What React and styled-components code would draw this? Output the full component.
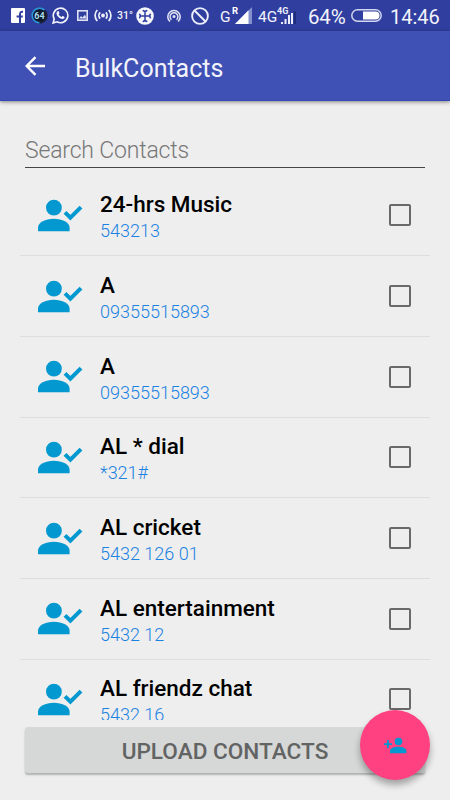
import styled, { createGlobalStyle } from "styled-components";

const GlobalStyle = createGlobalStyle`
  * {
    box-sizing: border-box;
  }

  body {
    margin: 0;
    background-color: #eeeeee;
    font-family: Roboto, sans-serif;
  }
`;

const Screen = styled.div`
  position: relative;
  display: flex;
  flex-direction: column;
  width: 450px;
  height: 800px;
  overflow: hidden;
  background-color: #eeeeee;
`;

const StatusBar = styled.div`
  display: flex;
  align-items: center;
  flex: none;
  height: 31px;
  padding-left: 11px;
  background-color: #303f9f;
  color: #f2f3fb;
`;

const StatusIcon = styled.svg`
  display: block;
  flex: none;
  margin-right: ${({ $gap }) => $gap}px;
`;

const StatusText = styled.span`
  flex: none;
  width: ${({ $width }) => $width}px;
  font-size: ${({ $size }) => $size}px;
  font-weight: ${({ $weight }) => $weight || 400};
  letter-spacing: ${({ $spacing }) => $spacing || 0}px;
  line-height: 28px;
  padding-top: ${({ $drop }) => $drop || 0}px;
  white-space: nowrap;
`;

const AppBar = styled.header`
  position: relative;
  display: flex;
  align-items: center;
  flex: none;
  height: 70px;
  padding-left: 25px;
  background-color: #3f51b5;
  border-bottom: 1px solid #3346b4;
  box-shadow: 0 1px 4px rgba(0, 0, 0, 0.45);
`;

const BackButton = styled.button`
  display: flex;
  width: 50px;
  padding: 0;
  border: none;
  background-color: transparent;
  cursor: pointer;
`;

const Title = styled.h1`
  margin: 5px 0 0;
  color: #f3f4fb;
  font-size: 25px;
  font-weight: 400;
`;

const SearchInput = styled.input`
  flex: none;
  width: 400px;
  height: 36px;
  margin: 31px 25px 0;
  padding: 2px 0 0;
  border: none;
  border-bottom: 1px solid #454545;
  outline: none;
  background-color: transparent;
  font-family: Roboto, sans-serif;
  font-size: 23px;
  font-weight: 300;
  letter-spacing: -0.18px;

  &::placeholder {
    color: #777777;
    opacity: 1;
  }
`;

const ContactList = styled.ul`
  flex: none;
  height: 545px;
  margin: 7px 20px 0;
  padding: 0.6px 0 0;
  overflow: hidden;
  list-style: none;
`;

const ContactRow = styled.li`
  display: flex;
  height: 80.67px;
  padding: 0 19px 0 18px;
  border-bottom: 1px solid #dddddd;
`;

const ContactIcon = styled.svg`
  display: block;
  flex: none;
  margin-top: 23.4px;
`;

const ContactInfo = styled.div`
  flex: 1;
  padding: 14.7px 0 0 17px;
`;

const Name = styled.div`
  color: #000000;
  font-size: 22.5px;
  font-weight: 500;
  line-height: 28px;
`;

const Phone = styled.div`
  color: #1b82e2;
  font-size: 18px;
  font-weight: 300;
  line-height: 25.4px;
`;

const Checkbox = styled.input`
  appearance: none;
  flex: none;
  width: 22px;
  height: 22px;
  margin: 28.7px 0 0;
  border: 2px solid #696969;
  border-radius: 2px;
`;

const UploadButton = styled.button`
  flex: none;
  width: 400px;
  height: 46px;
  margin: 7px 25px 0;
  padding: 2px 0 0;
  border: none;
  border-radius: 3px;
  background-color: #d6d7d7;
  box-shadow: 0 2px 2px rgba(0, 0, 0, 0.26);
  color: #626363;
  font-family: Roboto, sans-serif;
  font-size: 22.6px;
  font-weight: 500;
`;

const Fab = styled.button`
  position: absolute;
  right: 20px;
  bottom: 20px;
  display: flex;
  align-items: center;
  justify-content: center;
  width: 70px;
  height: 70px;
  padding: 0;
  border: none;
  border-radius: 50%;
  background-color: #ff4081;
  box-shadow: 0 5px 7px rgba(0, 0, 0, 0.32);
`;

const contacts = [
  { name: "24-hrs Music", phone: "543213" },
  { name: "A", phone: "09355515893" },
  { name: "A", phone: "09355515893" },
  { name: "AL * dial", phone: "*321#" },
  { name: "AL cricket", phone: "5432 126 01" },
  { name: "AL entertainment", phone: "5432 12" },
  { name: "AL friendz chat", phone: "5432 16" },
];

const FacebookIcon = () => (
  <StatusIcon width="14" height="15" viewBox="0 0 14 15" $gap={6}>
    <rect width="14" height="15" rx="1" fill="#ffffff" />
    <path
      d="M9 15V9.2M5.6 8.4h6.2M9 10V6.3c0-2 .8-2.6 3-2.5"
      fill="none"
      stroke="#303f9f"
      strokeWidth="2"
    />
  </StatusIcon>
);

const BatteryRing = () => (
  <StatusIcon width="17" height="17" viewBox="0 0 17 17" $gap={4}>
    <circle cx="8.5" cy="8.5" r="7.2" fill="#101a2b" stroke="#18213c" strokeWidth="2" />
    <path
      d="M8.5 15.8A7.3 7.3 0 1 1 13.5 3.2"
      fill="none"
      stroke="#2d92da"
      strokeWidth="1.7"
    />
    <text
      x="8.5"
      y="11.7"
      textAnchor="middle"
      fontFamily="Roboto, sans-serif"
      fontSize="9"
      fontWeight="700"
      fill="#a9dced"
    >
      64
    </text>
  </StatusIcon>
);

const WhatsAppIcon = () => (
  <StatusIcon width="17" height="17" viewBox="0 0 17 17" $gap={8}>
    <path
      d="M1.1 16l1.1-4A7.3 7.3 0 1 1 5 14.8z"
      fill="none"
      stroke="#f2f3fb"
      strokeWidth="1.6"
    />
    <path
      d="M5.5 4.3c.9-.6 1.3 0 1.9 1.6.2.5-.5.9-.7 1.3.7 1.4 1.6 2.2 2.9 2.8.5-.3.9-1.1 1.3-.9 1.7.8 2.1 1 1.5 2-1 1.6-3.2.9-4.8-.1C5.2 9.6 3.3 6.4 5.5 4.3z"
      fill="#f2f3fb"
    />
  </StatusIcon>
);

const PictureIcon = () => (
  <StatusIcon width="11" height="11" viewBox="0 0 11 11" $gap={6}>
    <rect x=".8" y=".8" width="9.4" height="9.4" fill="none" stroke="#dfe2f4" strokeWidth="1.6" />
    <path d="M2 8.5l2-2.5 1.5 1.5L8 4.8l1.5 3.7z" fill="#dfe2f4" />
  </StatusIcon>
);

const BroadcastIcon = () => (
  <StatusIcon width="18" height="13" viewBox="0 0 18 13" $gap={5}>
    <circle cx="9" cy="6.5" r="1.9" fill="#eceefa" />
    <path
      d="M6.2 3.3a4.6 4.6 0 0 0 0 6.4M11.8 3.3a4.6 4.6 0 0 1 0 6.4M3.3 1a8 8 0 0 0 0 11M14.7 1a8 8 0 0 1 0 11"
      fill="none"
      stroke="#eceefa"
      strokeWidth="1.8"
    />
  </StatusIcon>
);

const CloverIcon = () => (
  <StatusIcon width="18" height="18" viewBox="0 0 18 18" $gap={13}>
    <circle cx="9" cy="9" r="8.8" fill="#f5f6fc" />
    <path
      d="M9 4v10M4 9h10M7.3 3.6Q9 5.2 10.7 3.6M7.3 14.4Q9 12.8 10.7 14.4M3.6 7.3Q5.2 9 3.6 10.7M14.4 7.3Q12.8 9 14.4 10.7"
      fill="none"
      stroke="#303f9f"
      strokeWidth="1.5"
      strokeLinecap="round"
    />
  </StatusIcon>
);

const HotspotIcon = () => (
  <StatusIcon width="14" height="14" viewBox="0 0 14 14" $gap={10}>
    <circle cx="7" cy="7.5" r="1.5" fill="#e1e4f5" />
    <path
      d="M4.5 10.7a3.9 3.9 0 1 1 5 0M3 12.5a6.2 6.2 0 1 1 8 0"
      fill="none"
      stroke="#e1e4f5"
      strokeWidth="1.5"
    />
  </StatusIcon>
);

const BlockedIcon = () => (
  <StatusIcon width="18" height="18" viewBox="0 0 18 18" $gap={11}>
    <circle cx="9" cy="9" r="7.9" fill="none" stroke="#eceefa" strokeWidth="1.9" />
    <path d="M3.5 3.5l11 11" stroke="#eceefa" strokeWidth="1.9" />
  </StatusIcon>
);

const SignalIcon = () => (
  <StatusIcon width="21" height="19" viewBox="0 0 21 19" $gap={5}>
    <path d="M20 1v17H3z" fill="#8490ce" />
    <path d="M16.5 4.3V18H3z" fill="#ffffff" />
    <text
      x="0"
      y="8"
      fontFamily="Roboto, sans-serif"
      fontSize="9.5"
      fontWeight="700"
      fill="#ffffff"
    >
      R
    </text>
  </StatusIcon>
);

const SignalBars = () => (
  <StatusIcon width="20" height="20" viewBox="0 0 20 20" $gap={11}>
    <path d="M5 18v-2M8.5 18v-5M12 18V9M15 18V7" stroke="#eceefa" strokeWidth="2" />
    <path d="M18 18V5.5" stroke="#1e2d79" strokeWidth="2" />
    <text
      x="0"
      y="8"
      fontFamily="Roboto, sans-serif"
      fontSize="9"
      fontWeight="700"
      fill="#eceefa"
    >
      4G
    </text>
  </StatusIcon>
);

const BatteryIcon = () => (
  <StatusIcon width="31" height="13" viewBox="0 0 31 13" $gap={8}>
    <rect x=".8" y=".8" width="29.4" height="11.4" rx="5.7" fill="#303f9f" stroke="#d2d6ee" strokeWidth="1.5" />
    <path d="M12 2.5h12.5a4 4 0 0 1 0 8H12z" fill="#ffffff" />
  </StatusIcon>
);

const PersonCheck = () => (
  <ContactIcon width="45" height="33" viewBox="0 0 45 33">
    <circle cx="15.9" cy="8.7" r="7.9" fill="#0399d0" />
    <path d="M0 32.2v-3.7c0-4.8 7.4-8.7 15.8-8.7s15.8 3.9 15.8 8.7v3.7z" fill="#0399d0" />
    <path d="M27 13.3l5.4 5.4L43 8.1" fill="none" stroke="#0399d0" strokeWidth="4" />
  </ContactIcon>
);

const App = () => {
  return (
    <>
      <GlobalStyle />
      <Screen>
        <StatusBar>
          <FacebookIcon />
          <BatteryRing />
          <WhatsAppIcon />
          <PictureIcon />
          <BroadcastIcon />
          <StatusText $width={19} $size={10.5} $weight={500}>
            31°
          </StatusText>
          <CloverIcon />
          <HotspotIcon />
          <BlockedIcon />
          <StatusText $width={12} $size={15.5} $drop={3}>
            G
          </StatusText>
          <SignalIcon />
          <StatusText $width={19} $size={15.5} $drop={3}>
            4G
          </StatusText>
          <SignalBars />
          <StatusText $width={43} $size={20.5} $spacing={-0.2} $drop={2}>
            64%
          </StatusText>
          <BatteryIcon />
          <StatusText $width={52} $size={20} $drop={2}>
            14:46
          </StatusText>
        </StatusBar>
        <AppBar>
          <BackButton aria-label="Back">
            <svg width="21" height="20" viewBox="0 0 21 20">
              <path
                d="M20 10H2M10.5 1.2L1.7 10l8.8 8.8"
                fill="none"
                stroke="#ffffff"
                strokeWidth="2.4"
              />
            </svg>
          </BackButton>
          <Title>BulkContacts</Title>
        </AppBar>
        <SearchInput placeholder="Search Contacts" />
        <ContactList>
          {contacts.map((contact, index) => (
            <ContactRow key={index}>
              <PersonCheck />
              <ContactInfo>
                <Name>{contact.name}</Name>
                <Phone>{contact.phone}</Phone>
              </ContactInfo>
              <Checkbox type="checkbox" />
            </ContactRow>
          ))}
        </ContactList>
        <UploadButton>UPLOAD CONTACTS</UploadButton>
        <Fab aria-label="Add contact">
          <svg width="24" height="24" viewBox="0 0 24 24">
            <circle cx="15.5" cy="8.5" r="3.8" fill="#0399d0" />
            <path
              d="M7 20.2v-2.4c0-2.5 4-4 8.2-4s8.2 1.5 8.2 4v2.4zM4 7h1.800v3.200H9V12H5.800v3.200H4V12H1v-1.800h3z"
              fill="#0399d0"
            />
          </svg>
        </Fab>
      </Screen>
    </>
  );
};

export default App;
